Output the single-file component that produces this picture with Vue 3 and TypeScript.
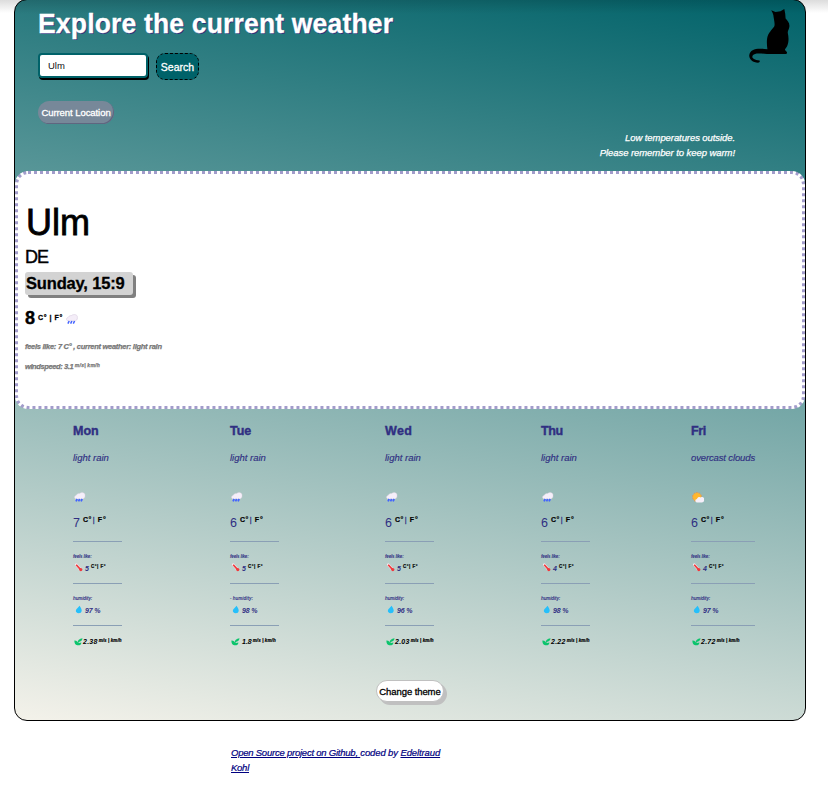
<script setup lang="ts">
import type { Directive } from 'vue'

interface Day {
  name: string
  text: string
  icon: 'rain' | 'sun'
  temp: number
  feels: number
  humidityLabel: string
  humidity: number
  wind: string
}

const days: Day[] = [
  { name: 'Mon', text: 'light rain', icon: 'rain', temp: 7, feels: 5, humidityLabel: 'humidity:', humidity: 97, wind: '2.38' },
  { name: 'Tue', text: 'light rain', icon: 'rain', temp: 6, feels: 5, humidityLabel: '- humidity:', humidity: 98, wind: '1.8' },
  { name: 'Wed', text: 'light rain', icon: 'rain', temp: 6, feels: 5, humidityLabel: 'humidity:', humidity: 96, wind: '2.03' },
  { name: 'Thu', text: 'light rain', icon: 'rain', temp: 6, feels: 4, humidityLabel: 'humidity:', humidity: 98, wind: '2.22' },
  { name: 'Fri', text: 'overcast clouds', icon: 'sun', temp: 6, feels: 4, humidityLabel: 'humidity:', humidity: 97, wind: '2.72' },
]

const nameWidth: Record<string, number> = { Mon: 26, Tue: 21, Wed: 27, Thu: 22, Fri: 15 }

// Tracks a label so that it spans the given number of pixels.
const vFit: Directive<HTMLElement, number> = {
  mounted(el, { value }) {
    const natural = el.offsetWidth
    const count = (el.textContent ?? '').length
    if (count) el.style.letterSpacing = `${(value - natural) / count}px`
  },
}
</script>

<template>
  <div class="page">
    <main class="app">
      <header class="head">
        <div class="left">
          <h1><span v-fit="382">Explore the current weather</span></h1>
          <form class="search" @submit.prevent>
            <div class="field"><span v-fit="17">Ulm</span></div>
            <button class="go"><span v-fit="33">Search</span></button>
          </form>
          <button class="loc"><span v-fit="69">Current Location</span></button>
        </div>
        <div class="right">
          <svg class="cat" viewBox="0 0 42 54" width="42" height="54">
            <path d="M22.2 1.2 L26.5 3 L31.5 2.3 L35.3 0 L36.2 4.5 L36.6 9.5 C38.5 11.5 40.8 14 40.4 17.5 C40.2 20 38.5 22 38.8 24 C39.7 28 40 33 38.2 37 C37.2 39.2 35.8 40 36 41 L38.1 43.2 L37.5 45 L18 45 C12 44.6 6 43.3 3.7 46.4 C2.4 48.7 4.5 50.7 10.5 51.5 C11.3 52.4 10.4 53.7 9 53.7 C3.5 53.5 -.2 50 .3 46 C1.2 39.8 8 38.8 18.4 40.2 C18 37 17.5 33 18.2 29 C19.1 24 22.8 21 25.2 17.5 C26.1 15.8 25.3 12 24.6 8 C24.5 6 24 4.3 22.2 1.2Z" />
          </svg>
          <p class="advice"><span v-fit="110">Low temperatures outside.</span><br /><span v-fit="135">Please remember to keep warm!</span></p>
        </div>
      </header>

      <section class="today">
        <h2><span v-fit="64">Ulm</span></h2>
        <h3><span v-fit="23">DE</span></h3>
        <div class="date"><span v-fit="99">Sunday, 15:9</span></div>
        <div class="now">
          <b class="deg">8</b><b class="unit"><span v-fit="25">C° | F°</span></b>
          <svg class="rain" viewBox="0 0 12 10" width="12" height="10">
            <path d="M2.3 7C-.1 6.8 0 3.9 2 3.5 2.8 1.8 4.8 1.5 5.6 1.5 7.5-.2 11.6.3 11.4 3.3 11.8 6 9.8 7 8 7Z" fill="#f4edf8" stroke="#d8cce0" stroke-width=".6" />
            <path d="M3.2 7l-1.3 2.6M5.9 7l-1.3 2.6M8.6 7l-1.3 2.6" stroke="#4263ff" stroke-width="1.5" />
          </svg>
        </div>
        <p class="detail feels"><span v-fit="137">feels like: 7 C° , current weather: light rain</span></p>
        <p class="detail"><span v-fit="50">windspeed: 3.1 </span><sup><span v-fit="25">m/s| km/h</span></sup></p>
      </section>

      <section class="forecast">
        <article v-for="d in days" :key="d.name" class="day">
          <h4><span v-fit="nameWidth[d.name]">{{ d.name }}</span></h4>
          <p class="cond"><span v-fit="d.icon === 'sun' ? 64 : 36">{{ d.text }}</span></p>
          <div class="pic">
            <svg v-if="d.icon === 'rain'" viewBox="0 0 12 10" width="12" height="10">
              <path d="M2.3 7C-.1 6.8 0 3.9 2 3.5 2.8 1.8 4.8 1.5 5.6 1.5 7.5-.2 11.2.3 11 3.3 11.4 6 9.8 7 8 7Z" fill="#f5effa" stroke="#dfd2df" stroke-width=".4" />
              <path d="M3.2 7l-1.2 2.4M5.7 7l-1.2 2.4M8.2 7l-1.2 2.4" stroke="#4263ff" stroke-width="1.7" />
            </svg>
            <svg v-else class="sun" viewBox="0 0 13 11" width="13" height="11">
              <circle cx="5" cy="5" r="4.1" fill="#ffb72d" />
              <circle cx="5" cy="5" r="4.5" fill="none" stroke="#f6923d" stroke-width=".9" stroke-dasharray="1.8 1" />
              <path d="M5 10.5C2.7 10.2 2.9 7.2 5 7 5.8 4.6 8 4.8 8.7 5.6 10.6 4.3 12.6 5.8 12 7.6 12.6 9.6 11 10.6 9.5 10.5Z" fill="#f5effa" />
            </svg>
          </div>
          <div class="temp">{{ d.temp }}<b><span v-fit="9">C°</span></b><i>|</i><b><span v-fit="9">F°</span></b></div>
          <div class="cell">
            <small><span v-fit="19">feels like:</span></small>
            <div class="val">
              <svg viewBox="0 0 8 9" width="8" height="9">
                <path d="M1.2 1.7L5.6 6.6" stroke="#f5e9ee" stroke-width="2.6" stroke-linecap="round" />
                <path d="M1.2 1.7L5.6 6.6" stroke="#ef393c" stroke-width="1.7" />
                <circle cx="5.8" cy="6.6" r="1.6" fill="#ef393c" />
              </svg>
              <em class="num">{{ d.feels }}</em><sup class="mini"><span v-fit="15">C°| F°</span></sup>
            </div>
          </div>
          <div class="cell">
            <small><span v-fit="d.name === 'Tue' ? 23 : 19">{{ d.humidityLabel }}</span></small>
            <div class="val">
              <svg viewBox="0 0 8 9" width="8" height="9">
                <path d="M4.6 .7C5.9 2.6 6.8 4.3 6.7 5.7 6.6 7.4 5.4 8.2 3.7 8.2 1.7 8.2 .6 7 .9 5.3 1.2 3.7 3.2 2.6 4.6 .7Z" fill="#26bffa" />
              </svg>
              <em class="num"><span v-fit="15.5">{{ d.humidity }} %</span></em>
            </div>
          </div>
          <div class="cell wind">
            <svg viewBox="0 0 9 8" width="9" height="8">
              <path d="M.4 2.6C2.4 2.4 3.2 3.4 3.4 4.4 3.7 2.2 5.4.6 8.5.2 8.3 2.4 7.1 3.6 4.6 3.9L4.7 4.9 7.4 4.4C7.4 6.6 5.5 7.6 3.3 7.2 1.2 7.2.3 5.2.4 2.6Z" fill="#0cc46c" />
            </svg>
            <em :class="{ short: d.wind === '1.8' }"><span v-fit="d.wind === '1.8' ? 10 : 15">{{ d.wind }}</span></em><sup><span v-fit="23">m/s | km/h</span></sup>
          </div>
        </article>
      </section>
      <button class="theme"><span v-fit="61">Change theme</span></button>
    </main>
    <footer>
      <a><span v-fit="129">Open Source project on Github, </span></a><span v-fit="40">coded by </span><a><span v-fit="40">Edeltraud</span></a><br /><a><span v-fit="18">Kohl</span></a>
    </footer>
  </div>
</template>

<style>
body { margin: 0; background: #fff; }
</style>

<style scoped>
* { box-sizing: border-box; }
.page {
  height: 788px;
  overflow: hidden;
  font-family: "Liberation Sans", Arial, sans-serif;
  background: linear-gradient(#dcdcdc, #fff 13px);
}
h1, h2, h3, h4, p { margin: 0; }
span { white-space: pre; }
svg { display: block; flex: none; }
button { font-family: inherit; padding: 0; display: flex; align-items: center; justify-content: center; white-space: nowrap; }
.app {
  width: 792px;
  height: 722px;
  margin: -1px 0 0 14px;
  border: 1px solid #000;
  border-radius: 13px;
  background:
    linear-gradient(rgba(0, 0, 0, .13), rgba(0, 0, 0, 0) 14px),
    linear-gradient(190deg, #006269 0%, #f4f2ea 100%);
}
.head { height: 171px; display: flex; justify-content: space-between; padding-left: 23px; }
.left { width: 400px; }
h1 { height: 46px; line-height: 47px; font-size: 28.5px; color: #fff; text-shadow: 1px 1px 0 #30307c; white-space: nowrap; transform: scaleX(.93); transform-origin: left; -webkit-text-stroke: .3px #fff; }
.search { display: flex; gap: 8px; margin-top: 7px; }
.field {
  width: 110px; height: 25px; padding-left: 8px; border: 2px solid #006269; border-radius: 4px;
  box-shadow: 1px 2px 0 #000; background: #fff; color: #111; font-size: 9.5px; line-height: 21px;
}
.go { width: 43px; height: 27px; border: 1px dashed #000; border-radius: 9px; background: #006269; color: #fff; font-size: 10.5px; -webkit-text-stroke: .3px #fff; }
.loc { width: 76px; height: 23px; margin-top: 21px; border: 0; border-radius: 12px; background: #778899; color: #fff; font-size: 9.5px; box-shadow: inset -1px -1px 0 #5f6680; -webkit-text-stroke: .3px #fff; }
.right { width: 220px; padding-right: 14px; display: flex; flex-direction: column; align-items: flex-end; }
.cat { margin-top: 9px; }
.advice { margin: 67px 56px 0 0; font-size: 9.5px; font-style: italic; line-height: 15px; text-align: right; color: #fff; -webkit-text-stroke: .25px #fff; white-space: nowrap; }
.today { height: 238px; padding: 28px 0 0 7px; border: 3px dotted #a29ccb; border-radius: 13px; background: #fff; color: #000; }
h2 { height: 43px; padding-left: 1px; line-height: 42px; font-size: 36px; font-weight: 400; -webkit-text-stroke: .8px #000; }
h3 { height: 26px; line-height: 25px; font-size: 18px; font-weight: 400; -webkit-text-stroke: .4px #000; }
.date { width: 108px; height: 23px; margin-top: 1px; padding-left: 1px; border-radius: 3px; background: #d3d3d3; box-shadow: 3px 3px 0 #808080; font-size: 16.5px; font-weight: 700; line-height: 23px; white-space: nowrap; -webkit-text-stroke: .3px #000; }
.now { display: flex; height: 20px; margin-top: 14px; }
.deg { width: 13px; font-size: 18px; line-height: 18px; -webkit-text-stroke: .4px #000; }
.unit { width: 28px; font-size: 7px; line-height: 17px; -webkit-text-stroke: .3px #000; }
.now .rain { margin-top: 5px; }
.detail { height: 19px; line-height: 19px; color: #777; font-size: 7.5px; font-weight: 700; font-style: italic; white-space: nowrap; -webkit-text-stroke: .25px; }
.feels { height: 20px; margin-top: 8px; }
.detail sup { font-size: 5px; line-height: 0; vertical-align: 2px; }
.forecast { display: grid; grid-template-columns: 157px 155px 156px 150px 64px; height: 269px; padding: 12px 0 0 58px; color: #302f82; }
.day { display: flex; flex-direction: column; align-items: flex-start; width: 49px; }
.day:last-child { width: 64px; }
h4 { height: 20px; font-size: 12.5px; line-height: 20px; -webkit-text-stroke: .4px; }
.cond { height: 16px; margin-top: 9px; font-size: 9.5px; font-style: italic; line-height: 16px; white-space: nowrap; -webkit-text-stroke: .15px; }
.pic { height: 36px; padding: 26px 0 0 1px; }
.sun { margin-top: 0; }
.temp { display: flex; align-items: flex-start; margin-top: 12px; height: 18px; font-size: 12.5px; line-height: 18px; }
.temp b { margin-left: 3px; color: #000; font-size: 7px; line-height: 12px; -webkit-text-stroke: .2px; }
.temp i { margin-left: 1px; font-size: 7px; font-style: normal; line-height: 11px; -webkit-text-stroke: .3px; }
.temp i + b { margin-left: 3px; }
.cell { width: 100%; height: 42px; padding-top: 10px; border-top: 1px solid #8a9fb5; }
.temp + .cell { margin-top: 9px; }
small { display: block; height: 9px; font-size: 4.5px; font-style: italic; font-weight: 700; line-height: 9px; white-space: nowrap; }
.val { display: flex; height: 16px; padding: 2px 0 0 2px; }
.num { margin-left: 2px; font-size: 7px; line-height: 11px; font-weight: 700; }
.mini { margin-left: 2px; color: #000; font-size: 4.5px; font-weight: 700; line-height: 7px; vertical-align: top; -webkit-text-stroke: .2px; white-space: nowrap; }
.wind { display: flex; padding: 12px 0 0 1px; color: #000; white-space: nowrap; }
.wind em { font-size: 7px; font-weight: 700; line-height: 8px; }
.wind .short { margin-left: 2px; }
.wind sup { margin-left: 1px; font-size: 4.5px; font-weight: 700; font-style: italic; line-height: 5px; -webkit-text-stroke: .2px; }
.theme { width: 68px; height: 22px; margin: 2px auto 0 361px; border: 1px solid #c0c0c0; border-radius: 12px; background: #fff; box-shadow: 3px 3px 0 #c0c0c0; color: #000; font-size: 9.5px; -webkit-text-stroke: .3px #000; }
footer { width: 230px; margin: 24px 0 0 231px; color: #000080; font-size: 9.5px; font-style: italic; line-height: 15px; white-space: nowrap; -webkit-text-stroke: .2px; }
a { color: #000080; text-decoration: underline; }
</style>
